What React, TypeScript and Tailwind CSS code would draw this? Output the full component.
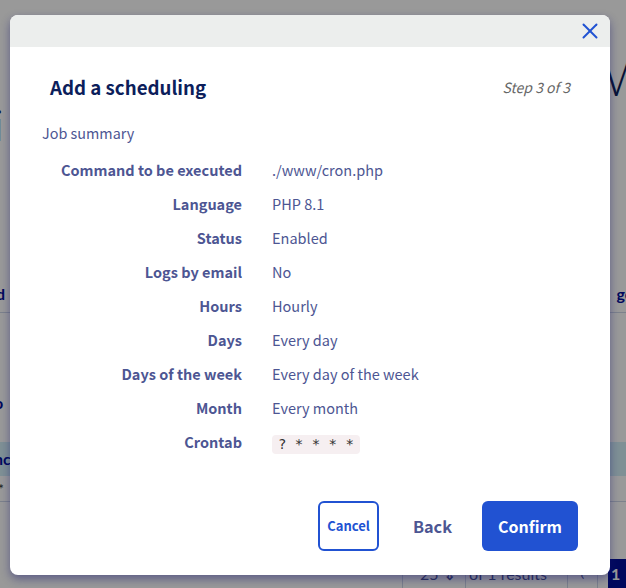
import { X } from "lucide-react";

const rows = [
  { label: "Command to be executed", value: "./www/cron.php" },
  { label: "Language", value: "PHP 8.1" },
  { label: "Status", value: "Enabled" },
  { label: "Logs by email", value: "No" },
  { label: "Hours", value: "Hourly" },
  { label: "Days", value: "Every day" },
  { label: "Days of the week", value: "Every day of the week" },
  { label: "Month", value: "Every month" },
];

function BackgroundPage() {
  return (
    <div className="w-full h-[588px] bg-white overflow-hidden flex flex-col font-['Lato',sans-serif] text-[#000e9c]">
      <div className="h-[55px]" />
      <div className="h-[50px] flex justify-end items-center">
        <span className="text-[48px] font-light leading-none mr-[-26px] text-[#0c1e5b]">W</span>
      </div>
      <div className="h-[45px] flex items-center">
        <span className="text-[44px] font-light leading-none ml-[-6px] text-[#0c1e5b]">i</span>
      </div>
      <div className="h-[134px]" />
      <div className="h-[38px] flex justify-between items-center border-b border-[#cfd8e8] font-bold text-[16px]">
        <span className="ml-[-4px]">d</span>
        <span className="mr-[-8px]">go</span>
      </div>
      <div className="h-[78px]" />
      <div className="h-[30px] flex items-center font-bold text-[16px]">
        <span className="ml-[-6px]">o</span>
      </div>
      <div className="h-[25px]" />
      <div className="h-[35px] bg-[#d4f0f8] flex items-center font-bold text-[16px]">
        <span className="ml-[-6px]">nc</span>
      </div>
      <div className="h-[25px] flex items-center text-[14px] text-[#333]">
        <span className="ml-[-2px]">*</span>
      </div>
      <div className="border-b border-[#cfd8e8]" />
      <div className="h-[59px]" />
      <div className="h-[30px] flex justify-end items-stretch text-[16px] text-[#4d5693]">
        <div className="flex items-start pt-[3px] border-l border-[#cfd8e8] w-[63px] pl-[17px]">25 ⇕</div>
        <div className="flex items-start pt-[3px] border-l border-r border-[#cfd8e8] w-[103px] pl-[3px]">of 1 results</div>
        <div className="flex items-start pt-[3px] justify-center border-r border-[#cfd8e8] w-[30px]">‹</div>
        <div className="flex items-start pt-[3px] w-[30px] ml-[10px] mr-[-12px] pl-[3px] bg-[#000e9c] text-white font-bold">1</div>
      </div>
    </div>
  );
}

export default function App() {
  return (
    <div className="relative w-[626px] h-[588px] overflow-hidden">
      <BackgroundPage />
      <div className="absolute inset-0 bg-black/40" />

      <div className="absolute left-[10px] top-[15px] w-[600px] h-[560px] bg-white rounded-lg overflow-hidden flex flex-col shadow-[0_4px_10px_rgba(20,20,110,0.45)] font-['Noto_Sans_CJK_JP',sans-serif]">
        <div className="h-8 bg-[#eceeed] flex justify-end items-center pr-[7px] shrink-0">
          <X size={26} strokeWidth={1.8} className="text-[#2152d2]" />
        </div>

        <div className="flex items-center justify-between pt-[26px] px-10">
          <h2 className="text-[18.7px] leading-7 font-bold text-[#0c1e5b]">Add a scheduling</h2>
          <span className="text-[14px] leading-5 italic text-[#666]">Step 3 of 3</span>
        </div>

        <p className="mt-[22px] ml-8 text-[14.4px] leading-5 text-[#4d5693]">Job summary</p>

        <div className="mt-[10px] ml-8 grid grid-cols-[200px_1fr] gap-x-[30px] leading-5 text-[#4d5693]">
          {rows.map((r) => (
            <div key={r.label} className="contents">
              <div className="py-[7px] text-right font-bold text-[14.5px]">{r.label}</div>
              <div className="py-[7px] text-[14.5px]">{r.value}</div>
            </div>
          ))}
          <div className="py-[7px] text-right font-bold text-[14.5px]">Crontab</div>
          <div className="py-[7px]">
            <code className="inline-block px-[6px] h-[19px] leading-[19px] rounded bg-[#f6eff1] text-[#333] text-[14px] font-['DejaVu_Sans_Mono',monospace]">
              ? * * * *
            </code>
          </div>
        </div>

        <div className="mt-auto pb-6 pr-8 flex justify-end items-center">
          <button className="h-[50px] px-[7px] rounded-md border-2 border-[#2152d2] text-[#2152d2] text-[13px] leading-5 font-bold">
            Cancel
          </button>
          <button className="ml-[17px] h-[49px] px-[17px] text-[#4d5693] text-[16.3px] leading-6 font-bold">Back</button>
          <button className="ml-[13px] h-[50px] w-[96px] rounded-md bg-[#2152d2] text-white text-[16px] leading-6 font-bold">
            Confirm
          </button>
        </div>
      </div>
    </div>
  );
}
